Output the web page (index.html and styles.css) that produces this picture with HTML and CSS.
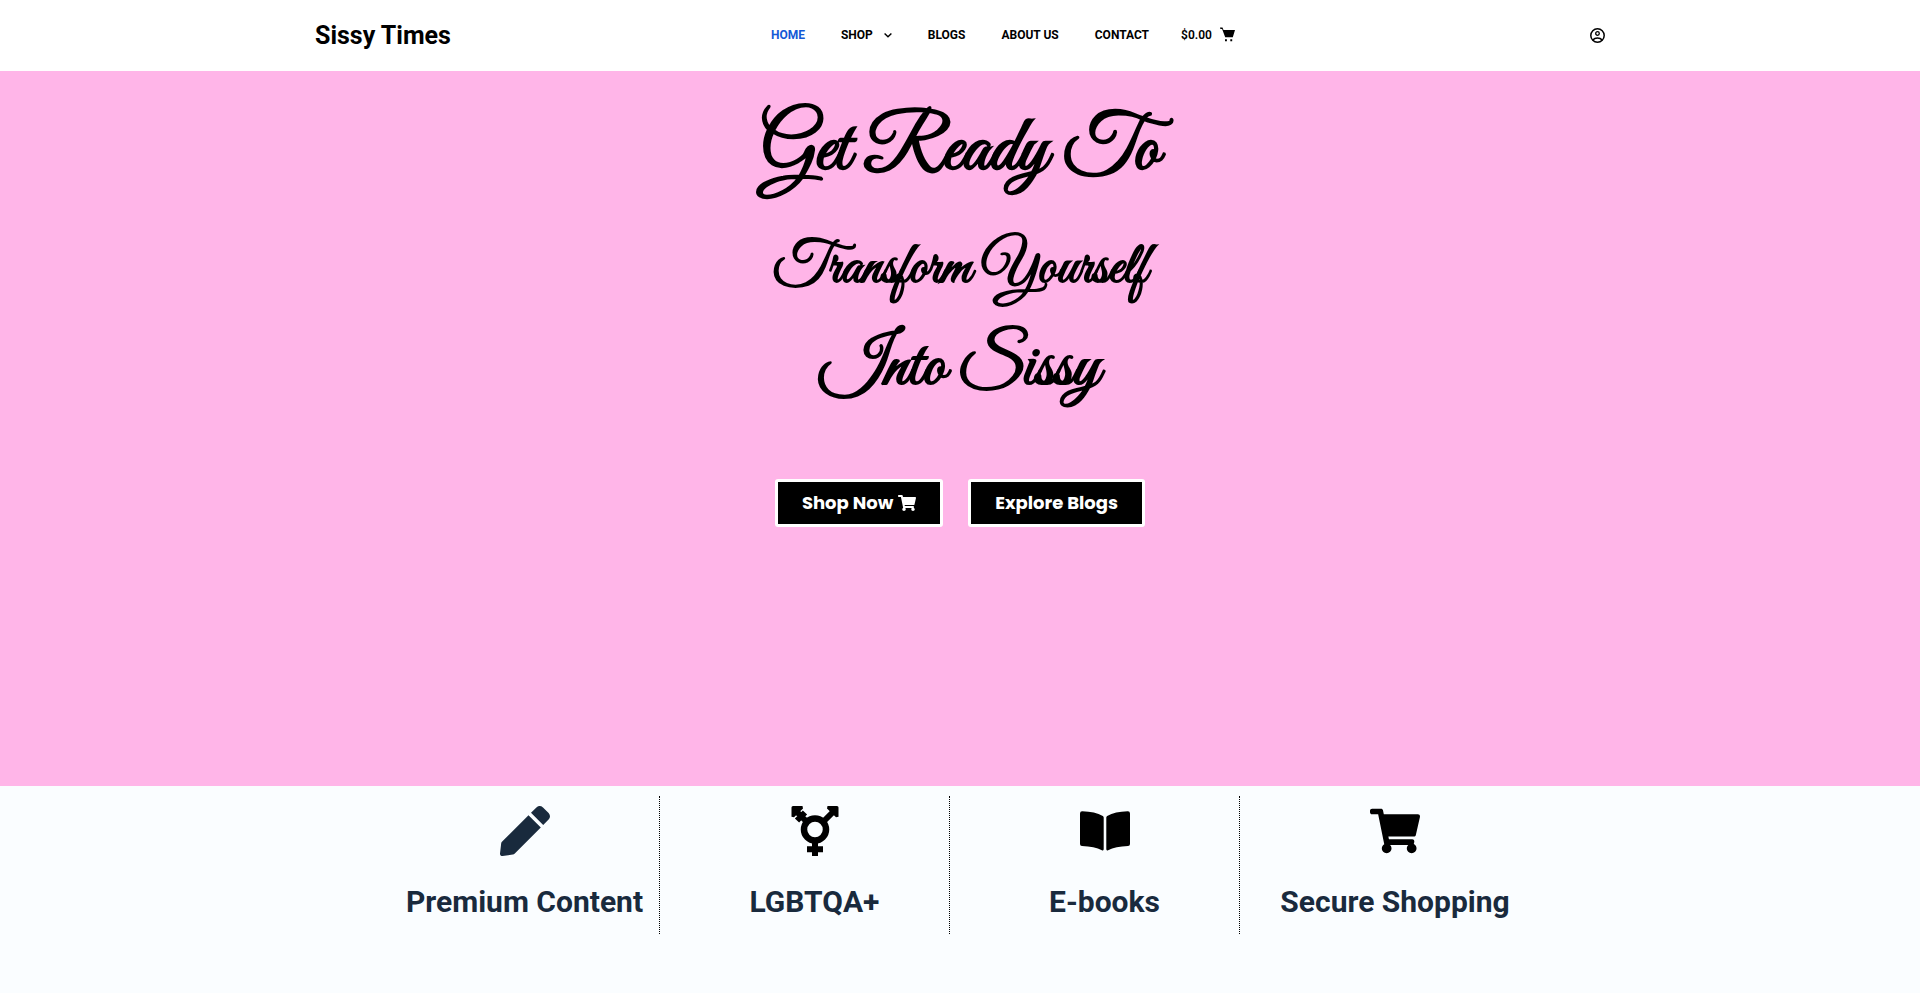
FILE: index.html
```html
<!DOCTYPE html>
<html lang="en">
<head>
<meta charset="utf-8">
<meta name="viewport" content="width=device-width, initial-scale=1">
<title>Sissy Times</title>
<link rel="stylesheet" href="styles.css">
</head>
<body>
<header class="site-header">
  <div class="header-inner">
    <a class="brand" href="#">Sissy Times</a>
    <nav class="menu" aria-label="Main">
      <a class="menu-link active" href="#">Home</a>
      <a class="menu-link" href="#">Shop
        <svg class="chevron" viewBox="0 0 8 8" aria-hidden="true"><path d="M.6 2.400 4 5.800l3.400-3.400" fill="none" stroke="currentColor" stroke-width="1.400"/></svg>
      </a>
      <a class="menu-link" href="#">Blogs</a>
      <a class="menu-link" href="#">About Us</a>
      <a class="menu-link" href="#">Contact</a>
    </nav>
    <div class="tools">
      <a class="cart" href="#" aria-label="Shopping cart, $0.00">$0.00
        <svg class="icon-small" viewBox="0 0 15 15" aria-hidden="true"><path d="M0 .6h2.500l1 2.300H15l-2.200 7.400H5.200L2.100 2H.4zM5 12.300h1.900v1.900H5zm5.300 0h1.900v1.900h-1.900z"/></svg>
      </a>
      <a class="account" href="#" aria-label="Account">
        <svg class="icon-small" viewBox="0 0 15 15" aria-hidden="true"><circle cx="7.500" cy="7.500" r="6.700" fill="none" stroke="currentColor" stroke-width="1.500"/><circle cx="7.500" cy="5.500" r="1.800" fill="none" stroke="currentColor" stroke-width="1.300"/><path d="M2.400 11.900C3.600 9.900 5.400 9.300 7.500 9.300s3.900.6 5.100 2.600l-1.100 1c-.7-1.500-2.100-2.200-4-2.200s-3.300.7-4 2.200z"/></svg>
      </a>
    </div>
  </div>
</header>
<main>
  <section class="hero">
    <h1 class="script script-large">Get Ready To</h1>
    <h2 class="script script-medium">Transform Yourself</h2>
    <h2 class="script script-wide">Into Sissy</h2>
    <div class="actions">
      <a class="button" href="#">Shop Now
        <svg class="button-icon" viewBox="0 0 576 512" aria-hidden="true"><path d="M528.120 301.319l47.273-208C578.806 78.301 567.391 64 551.990 64H159.208l-9.166-44.810C147.758 8.021 137.930 0 126.529 0H24C10.745 0 0 10.745 0 24v16c0 13.255 10.745 24 24 24h69.883l70.248 343.435C147.325 417.100 136 435.222 136 456c0 30.928 25.072 56 56 56s56-25.072 56-56c0-15.674-6.447-29.835-16.824-40h209.647C430.447 426.165 424 440.326 424 456c0 30.928 25.072 56 56 56s56-25.072 56-56c0-22.172-12.888-41.332-31.579-50.405l5.517-24.276c3.413-15.018-8.002-29.319-23.403-29.319H218.117l-6.545-32h293.145c11.206 0 20.920-7.754 23.403-18.681z"/></svg>
      </a>
      <a class="button" href="#">Explore Blogs</a>
    </div>
  </section>
  <section class="features">
    <article class="feature">
      <svg class="feature-icon navy" viewBox="0 0 50 50" aria-hidden="true"><path d="M28.500 9.300 40.800 21.600 14.800 47.600Q14 48.400 12.800 48.500L2.600 50Q0 50 0 47.400L1.200 37.300Q1.300 36.300 2.200 35.500zM31 6.800 36.400 1.400Q39.700-1.400 43 1.400L48.600 7Q51.400 10.300 48.600 13.600L43.200 19z"/></svg>
      <h3 class="feature-title">Premium Content</h3>
    </article>
    <article class="feature">
      <svg class="feature-icon" viewBox="0 0 50 50" aria-hidden="true"><g fill="none" stroke="currentColor"><circle cx="25" cy="23.500" r="11" stroke-width="6.500"/><path d="M25 35v15M17 43.200h16M33 16l10-10M17 16 6 5M7 14.500l8-8" stroke-width="6"/></g><path d="M37.500 0H47q1.500 0 1.500 1.500v9.300l-2.500.5L37 2.500zM12.500 0H3Q1.500 0 1.500 1.500v9.300l2.500.5L13 2.500z"/></svg>
      <h3 class="feature-title">LGBTQA+</h3>
    </article>
    <article class="feature">
      <svg class="feature-icon" viewBox="0 0 50 50" aria-hidden="true"><path d="M0 7.500Q0 5.200 2.300 5.300 15 5.600 22.800 9.900q.9.500.9 1.500v31.700q0 2-1.800 1.100Q14.500 40.600 2 40.100 0 40 0 38zM50 7.500q0-2.300-2.300-2.200Q35 5.600 27.200 9.900q-.9.500-.9 1.500v31.700q0 2 1.800 1.100Q35.500 40.600 48 40.100q2-.1 2-2.100z"/></svg>
      <h3 class="feature-title">E-books</h3>
    </article>
    <article class="feature">
      <svg class="feature-icon" viewBox="0 0 576 512" aria-hidden="true"><path d="M528.120 301.319l47.273-208C578.806 78.301 567.391 64 551.990 64H159.208l-9.166-44.810C147.758 8.021 137.930 0 126.529 0H24C10.745 0 0 10.745 0 24v16c0 13.255 10.745 24 24 24h69.883l70.248 343.435C147.325 417.100 136 435.222 136 456c0 30.928 25.072 56 56 56s56-25.072 56-56c0-15.674-6.447-29.835-16.824-40h209.647C430.447 426.165 424 440.326 424 456c0 30.928 25.072 56 56 56s56-25.072 56-56c0-22.172-12.888-41.332-31.579-50.405l5.517-24.276c3.413-15.018-8.002-29.319-23.403-29.319H218.117l-6.545-32h293.145c11.206 0 20.920-7.754 23.403-18.681z"/></svg>
      <h3 class="feature-title">Secure Shopping</h3>
    </article>
  </section>
</main>
</body>
</html>
```
FILE: styles.css
```css
* {
  box-sizing: border-box;
}

body {
  margin: 0;
  background: #fafdff;
  color: #000;
  font-family: Roboto, "Liberation Sans", sans-serif;
}

a {
  color: inherit;
  text-decoration: none;
}

svg {
  display: block;
  fill: currentColor;
}

.site-header {
  background: #fff;
}

.header-inner {
  display: grid;
  grid-template-columns: 1fr auto 1fr;
  align-items: center;
  max-width: 1290px;
  min-height: 71px;
  margin: 0 auto;
}

.brand {
  font-size: 25px;
  font-weight: 700;
  line-height: 36px;
}

.menu {
  display: flex;
  padding-bottom: 2px;
  font-size: 12px;
  font-weight: 700;
  line-height: 16px;
  text-transform: uppercase;
}

.menu-link {
  display: flex;
  align-items: center;
  gap: 11px;
  padding: 0 18px;
}

.active {
  color: #1559d6;
}

.chevron {
  width: 8px;
  height: 8px;
}

.tools {
  display: flex;
  align-items: center;
  justify-content: space-between;
  padding-left: 14px;
}

.cart {
  display: flex;
  align-items: center;
  gap: 8px;
  padding-bottom: 2px;
  font-size: 12px;
  font-weight: 600;
}

.icon-small {
  width: 15px;
  height: 15px;
}

.hero {
  display: flex;
  flex-direction: column;
  align-items: center;
  min-height: 715px;
  padding: 31px 20px;
  background: #ffb5e8;
  text-align: center;
}

.script {
  margin: 0;
  font-family: "Great Vibes", "Liberation Serif", serif;
  font-weight: 700;
}

.script-large {
  font-size: 77px;
  line-height: 100px;
}

.script-medium {
  margin-top: 27px;
  font-size: 58px;
  line-height: 80px;
}

.script-wide {
  margin-top: 9px;
  font-size: 70px;
  line-height: 100px;
}

.actions {
  display: flex;
  flex-wrap: wrap;
  justify-content: center;
  gap: 25px;
  margin-top: 61px;
}

.button {
  display: flex;
  align-items: center;
  gap: 5px;
  padding: 12px 24px;
  border: 3px solid #fff;
  border-radius: 3px;
  background: #000;
  color: #fff;
  font-family: Poppins, Inter, sans-serif;
  font-size: 18px;
  font-weight: 700;
  line-height: 18px;
}

.button-icon {
  width: 18px;
  height: 16px;
}

.features {
  display: grid;
  grid-template-columns: repeat(4, 1fr);
  gap: 20px;
  max-width: 1140px;
  margin: 0 auto;
  padding: 10px 0;
}

.feature {
  display: flex;
  flex-direction: column;
  align-items: center;
  gap: 26px;
  padding: 10px 0 12px;
  border-right: 1px dotted #000;
}

.feature:last-child {
  border-right: 0;
}

.feature-icon {
  width: 50px;
  height: 50px;
}

.navy,
.feature-title {
  color: #192a3d;
}

.feature-title {
  margin: 0;
  font-size: 30px;
  font-weight: 700;
  line-height: 40px;
  white-space: nowrap;
}
```
